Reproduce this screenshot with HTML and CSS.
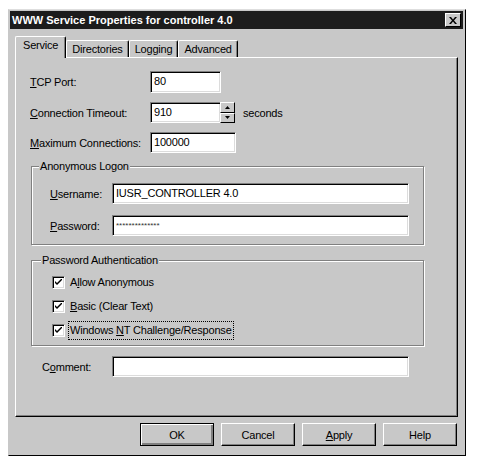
FILE: index.html
```html
<!DOCTYPE html>
<html>
<head>
<meta charset="utf-8">
<link rel="stylesheet" href="styles.css">
</head>
<body>
<div class="window">
  <div class="titlebar">
    <span class="title">WWW Service Properties for controller 4.0</span>
    <span class="close"><svg width="8" height="7" viewBox="0 0 8 7"><path d="M0 0h2l2 2.5 2-2.5h2l-3 3.5 3 3.5h-2l-2-2.5-2 2.5h-2l3-3.5z" fill="#000"/></svg></span>
  </div>
  <div class="tabs">
    <div class="tab active">Service</div>
    <div class="tab">Directories</div>
    <div class="tab">Logging</div>
    <div class="tab">Advanced</div>
  </div>
  <div class="panel">
    <div class="row r1">
      <span class="lbl w120"><u>T</u>CP Port:</span>
      <span class="field tcp">80</span>
    </div>
    <div class="row r2">
      <span class="lbl w120"><u>C</u>onnection Timeout:</span>
      <span class="field timeout">910</span>
      <span class="spin">
        <span class="sbtn"><svg width="5" height="3" viewBox="0 0 5 3"><path d="M2.5 0L5 3H0z" fill="#000"/></svg></span>
        <span class="sbtn"><svg width="5" height="3" viewBox="0 0 5 3"><path d="M0 0h5L2.5 3z" fill="#000"/></svg></span>
      </span>
      <span class="unit">seconds</span>
    </div>
    <div class="row r3">
      <span class="lbl w120"><u>M</u>aximum Connections:</span>
      <span class="field maxc">100000</span>
    </div>

    <fieldset class="group g1">
      <legend>Anonymous Logon</legend>
      <div class="row">
        <span class="lbl w62"><u>U</u>sername:</span>
        <span class="field wide">IUSR_CONTROLLER 4.0</span>
      </div>
      <div class="row gap11">
        <span class="lbl w62"><u>P</u>assword:</span>
        <span class="field wide pw">**************</span>
      </div>
    </fieldset>

    <fieldset class="group g2">
      <legend>Password Authentication</legend>
      <div class="check">
        <span class="box"><svg width="7" height="7" viewBox="0 0 7 7"><path d="M0 2l2 2 5-5v2l-5 5-2-2z" fill="#000"/></svg></span>
        <span class="ctext">A<u>l</u>low Anonymous</span>
      </div>
      <div class="check">
        <span class="box"><svg width="7" height="7" viewBox="0 0 7 7"><path d="M0 2l2 2 5-5v2l-5 5-2-2z" fill="#000"/></svg></span>
        <span class="ctext"><u>B</u>asic (Clear Text)</span>
      </div>
      <div class="check">
        <span class="box"><svg width="7" height="7" viewBox="0 0 7 7"><path d="M0 2l2 2 5-5v2l-5 5-2-2z" fill="#000"/></svg></span>
        <span class="ctext focus">Windows <u>N</u>T Challenge/Response</span>
      </div>
    </fieldset>

    <div class="row comment">
      <span class="lbl w70">C<u>o</u>mment:</span>
      <span class="field wide"></span>
    </div>
  </div>
  <div class="buttons">
    <button class="btn default">OK</button>
    <button class="btn">Cancel</button>
    <button class="btn"><u>A</u>pply</button>
    <button class="btn">Help</button>
  </div>
</div>
</body>
</html>
```

FILE: styles.css
```css
html, body {
  margin: 0;
  padding: 0;
  background: #ffffff;
}
body {
  font-family: "Liberation Sans", Arial, sans-serif;
  font-size: 11px;
  letter-spacing: -0.2px;
  color: #000;
}
u { text-decoration: underline; text-underline-offset: 1px; }

.window {
  margin: 9px 0 0 8px;
  width: 458px;
  height: 447px;
  box-sizing: border-box;
  background: #c8c8c8;
  border-top: 1px solid #dedede;
  border-left: 1px solid #c8c8c8;
  border-right: 1px solid #000;
  border-bottom: 1px solid #000;
  padding: 1px 2px 1px 1px;
  display: flex;
  flex-direction: column;
}

.titlebar {
  height: 18px;
  background: #1c1c1c;
  display: flex;
  align-items: center;
  justify-content: space-between;
  padding: 0 2px 0 2px;
}
.title {
  color: #fff;
  font-weight: bold;
  font-size: 11px;
  letter-spacing: 0px;
}
.close {
  width: 14px;
  height: 12px;
  background: #c8c8c8;
  border-top: 1px solid #fff;
  border-left: 1px solid #fff;
  border-right: 1px solid #000;
  border-bottom: 1px solid #000;
  display: flex;
  align-items: center;
  justify-content: center;
}

.tabs {
  display: flex;
  align-items: flex-end;
  margin: 8px 0 0 5px;
  height: 20px;
  position: relative;
  z-index: 1;
}
.tab {
  height: 16px;
  line-height: 16px;
  padding: 0 5px;
  border-top: 1px solid #fff;
  border-left: 1px solid #fff;
  border-right: 1px solid #000;
  border-radius: 2px 2px 0 0;
  box-shadow: inset -1px 0 0 #808080;
}
.tab.active {
  line-height: 17px;
  padding: 0 7px 0 7px;
  background: #c8c8c8;
  margin-bottom: -1px;
  height: 21px;
}

.panel {
  margin-left: 5px;
  width: 443px;
  height: 360px;
  box-sizing: border-box;
  border-top: 1px solid #fff;
  border-left: 1px solid #fff;
  border-right: 1px solid #000;
  border-bottom: 1px solid #000;
  box-shadow: inset -1px -1px 0 #808080;
  padding: 13px 0 0 14px;
  display: flex;
  flex-direction: column;
}

.row {
  display: flex;
  align-items: center;
  height: 21px;
}
.r2 { margin-top: 10px; }
.r3 { margin-top: 9px; }
.lbl { flex: none; }
.w120 { width: 120px; }
.w62 { width: 62px; }
.w70 { width: 70px; }

.field {
  display: block;
  height: 21px;
  box-sizing: border-box;
  background: #fff;
  border-top: 1px solid #808080;
  border-left: 1px solid #808080;
  border-right: 1px solid #fff;
  border-bottom: 1px solid #fff;
  box-shadow: inset 1px 1px 0 #000, inset -1px -1px 0 #dcdcdc;
  padding: 2px 3px;
  line-height: 15px;
  white-space: nowrap;
}
.tcp { width: 71px; height: 22px; }
.timeout { width: 71px; }
.maxc { width: 86px; }
.wide { width: 297px; }
.pw { font-size: 8px; letter-spacing: 0; line-height: 13px; padding-top: 3px; color: #333; }

.spin {
  display: flex;
  flex-direction: column;
  width: 15px;
  height: 21px;
  margin-left: -1px;
}
.sbtn {
  flex: 1;
  box-sizing: border-box;
  background: #c8c8c8;
  border-top: 1px solid #fff;
  border-left: 1px solid #fff;
  border-right: 1px solid #000;
  border-bottom: 1px solid #000;
  display: flex;
  align-items: center;
  justify-content: center;
}
.unit { margin-left: 8px; }

.group {
  margin: 7px 0 0 1px;
  width: 393px;
  box-sizing: border-box;
  border: 1px solid #808080;
  box-shadow: inset 1px 1px 0 #fff, 1px 1px 0 #fff;
  padding: 0 0 0 18px;
  min-width: 0;
}
.group legend {
  padding: 0 1px;
  margin-left: -11px;
  line-height: 13px;
  background: #c8c8c8;
}
.g1 { padding-top: 10px; padding-bottom: 8px; }
.gap11 { margin-top: 11px; }

.g2 { margin-top: 9px; padding: 5px 0 5px 20px; }
.check {
  display: flex;
  align-items: center;
  height: 20px;
}
.check + .check { margin-top: 4px; }
.box {
  width: 13px;
  height: 13px;
  box-sizing: border-box;
  background: #fff;
  border-top: 1px solid #808080;
  border-left: 1px solid #808080;
  border-right: 1px solid #fff;
  border-bottom: 1px solid #fff;
  box-shadow: inset 1px 1px 0 #000, inset -1px -1px 0 #dcdcdc;
  display: flex;
  align-items: center;
  justify-content: center;
}
.ctext {
  margin-left: 3px;
  padding: 1px 1px;
  border: 1px dotted transparent;
  line-height: 15px;
}
.ctext.focus { border-color: #000; }

.comment { margin-top: 10px; margin-left: 12px; }

.buttons {
  display: flex;
  justify-content: flex-end;
  gap: 7px;
  margin-top: 6px;
  padding-right: 6px;
}
.btn {
  width: 74px;
  height: 23px;
  box-sizing: border-box;
  background: #c8c8c8;
  font-family: "Liberation Sans", Arial, sans-serif;
  font-size: 11px;
  letter-spacing: -0.2px;
  color: #000;
  border-top: 1px solid #fff;
  border-left: 1px solid #fff;
  border-right: 1px solid #000;
  border-bottom: 1px solid #000;
  box-shadow: inset -1px -1px 0 #808080;
  padding: 0;
  margin: 0;
}
.btn.default {
  border: 1px solid #000;
  box-shadow: inset 1px 1px 0 #fff, inset -2px -2px 0 #808080;
}
```
